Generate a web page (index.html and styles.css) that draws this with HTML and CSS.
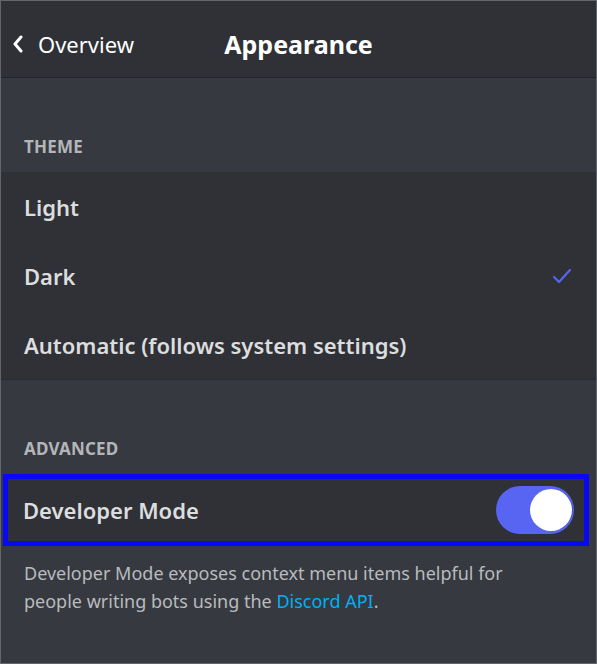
FILE: index.html
```html
<!DOCTYPE html>
<html lang="en">
<head>
  <meta charset="UTF-8">
  <meta name="viewport" content="width=device-width, initial-scale=1.0">
  <title>Appearance</title>
  <link rel="stylesheet" href="styles.css">
</head>
<body>
  <div class="screen">
    <header class="topbar">
      <a class="back" href="#">
        <svg class="chevron" width="12" height="18" viewBox="0 0 12 18">
          <path d="M9 2 L3 9 L9 16" fill="none" stroke="#ffffff" stroke-width="3" stroke-linecap="round" stroke-linejoin="round"/>
        </svg>
        <span>Overview</span>
      </a>
      <h1 class="title">Appearance</h1>
      <div></div>
    </header>

    <section class="section theme">
      <h2 class="section-label">Theme</h2>
      <div class="group">
        <div class="row">Light</div>
        <div class="row">Dark
          <svg class="check" width="22" height="18" viewBox="0 0 22 18">
            <path d="M3 10 L8 15 L19 3" fill="none" stroke="#5865f2" stroke-width="2.2" stroke-linecap="round" stroke-linejoin="round"/>
          </svg>
        </div>
        <div class="row sep">Automatic (follows system settings)</div>
      </div>
    </section>

    <section class="section advanced">
      <h2 class="section-label">Advanced</h2>
      <div class="row highlight">
        Developer Mode
        <span class="toggle on"><span class="knob"></span></span>
      </div>
      <p class="hint">Developer Mode exposes context menu items helpful for people writing bots using the <a href="#">Discord API</a>.</p>
    </section>
  </div>
</body>
</html>
```

FILE: styles.css
```css
body {
  margin: 0;
  background-color: #36393f;
  font-family: "Noto Sans", "Open Sans", sans-serif;
  color: #dcddde;
}
.screen {
  width: 597px;
  height: 664px;
  box-sizing: border-box;
  border: 1px solid #63666b;
  background-color: #36393f;
  overflow: hidden;
}
.topbar {
  height: 77px;
  box-sizing: border-box;
  padding-top: 10px;
  background-color: #2f3136;
  border-bottom: 1px solid #232428;
  display: grid;
  grid-template-columns: 1fr auto 1fr;
  align-items: center;
}
.back {
  display: flex;
  align-items: center;
  gap: 14px;
  padding-left: 11px;
  color: #ffffff;
  text-decoration: none;
  font-size: 22px;
}
.title {
  margin: 0;
  font-size: 25px;
  font-weight: 700;
  color: #ffffff;
}
.section-label {
  margin: 0;
  padding: 0 0 14px 23px;
  font-size: 17px;
  font-weight: 700;
  text-transform: uppercase;
  color: #b3b5b9;
  letter-spacing: 0.2px;
}
.theme {
  padding-top: 57px;
}
.advanced {
  padding-top: 57px;
}
.group {
  background-color: #2f3136;
  border-bottom: 1px solid #2a2c30;
}
.row {
  height: 69px;
  display: flex;
  align-items: center;
  justify-content: space-between;
  padding: 0 24px 0 23px;
  background-color: #2f3136;
  font-size: 22px;
  font-weight: 600;
  color: #dcddde;
}
.row.sep {
  box-shadow: inset 22px 1px 0 #2f3136, inset 0 1px 0 #393c42;
}
.check {
  margin-right: -1px;
}
.row.highlight {
  height: 62px;
  margin: 0 7px 0 2px;
  padding: 0 10px 0 15px;
  border: 5px solid #0808f8;
}
.toggle {
  width: 78px;
  height: 48px;
  border-radius: 24px;
  background-color: #5865f2;
  display: flex;
  align-items: center;
  justify-content: flex-end;
  padding: 0 2px;
  box-sizing: border-box;
}
.knob {
  width: 42px;
  height: 42px;
  border-radius: 50%;
  background-color: #ffffff;
  box-shadow: 1px 0 0 #4b55c4;
}
.hint {
  margin: 0;
  padding: 13px 0 0 23px;
  max-width: 490px;
  font-size: 18px;
  line-height: 28px;
  color: #b9bbbe;
}
.hint a {
  color: #00b0f4;
  text-decoration: none;
}
```
